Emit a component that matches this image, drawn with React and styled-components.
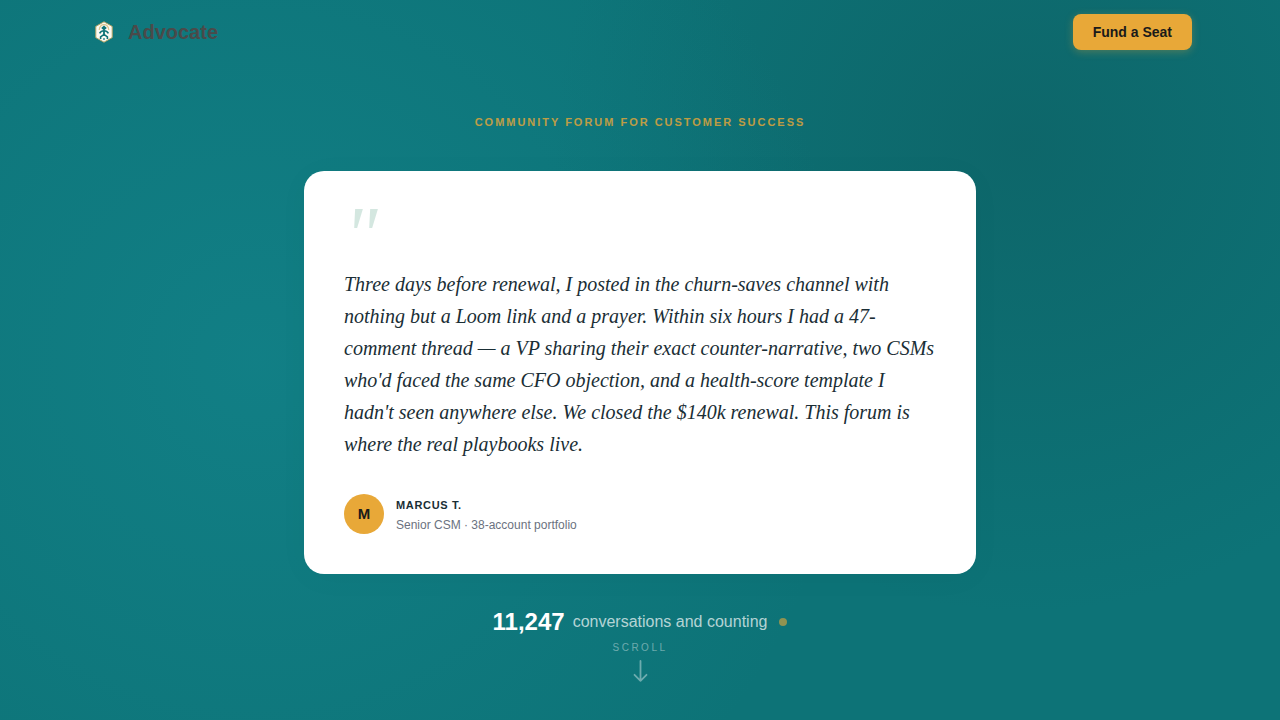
import styled, { createGlobalStyle } from "styled-components"

const GlobalStyle = createGlobalStyle`
* {
    box-sizing: border-box;
}
body {
    margin: 0;
    background: #0d7377;
    font-family: "Liberation Sans", Arial, sans-serif;
}
`

const testimonial = {
    quote: "Three days before renewal, I posted in the churn-saves channel with nothing but a Loom link and a prayer. Within six hours I had a 47-comment thread — a VP sharing their exact counter-narrative, two CSMs who'd faced the same CFO objection, and a health-score template I hadn't seen anywhere else. We closed the $140k renewal. This forum is where the real playbooks live.",
    name: "Marcus T.",
    role: "Senior CSM · 38-account portfolio",
}

const LogoIcon = () => (
    <svg width="32" height="32" viewBox="0 0 32 32" fill="none" aria-hidden="true">
        <path d="M16 5.8 L24.2 10.4 V21.6 L16 26.2 L7.8 21.6 V10.4 Z" fill="#fbfaf4" stroke="#b8a564" strokeWidth="1" strokeLinejoin="round" />
        <path d="M11.2 14 C11.6 10.4 13.6 8.6 16 8.6 C18.4 8.6 20.4 10.4 20.8 14" stroke="#dcc48c" strokeWidth="1.2" />
        <path d="M16 9.4 L18.8 12 L16 14.6 L13.2 12 Z" fill="#0d7377" />
        <path d="M11.6 17.4 C12.6 15.6 14.2 14.8 16 14.8 C17.8 14.8 19.4 15.6 20.4 17.4" stroke="#0d7377" strokeWidth="1.6" />
        <path d="M16 15 V20" stroke="#0d7377" strokeWidth="1.8" />
        <path d="M12.6 23 V20.8 L16 18.4 L19.4 20.8 V23" stroke="#0d7377" strokeWidth="1.6" />
        <path d="M16 22 V24" stroke="#0d7377" strokeWidth="1.2" />
    </svg>
)

const ArrowDown = () => (
    <svg width="16" height="24" viewBox="0 0 16 24" fill="none" stroke="currentColor" strokeWidth="1.8" strokeLinecap="round" strokeLinejoin="round" aria-hidden="true">
        <path d="M8.5 1 V20.8 M2.5 14.8 L8.5 20.8 L14.5 14.8" />
    </svg>
)

const App = () => {
    return (
        <Page>
            <GlobalStyle />
            <Header>
                <Brand href="#">
                    <LogoIcon />
                    Advocate
                </Brand>
                <FundButton type="button">Fund a Seat</FundButton>
            </Header>
            <Hero>
                <Eyebrow>Community forum for customer success</Eyebrow>
                <Card>
                    <QuoteMark aria-hidden="true">"</QuoteMark>
                    <Quote>{testimonial.quote}</Quote>
                    <Author>
                        <Avatar>{testimonial.name[0]}</Avatar>
                        <AuthorText>
                            <Name>{testimonial.name}</Name>
                            <Role>{testimonial.role}</Role>
                        </AuthorText>
                    </Author>
                </Card>
                <Counter>
                    <Count>11,247</Count>
                    <CountLabel>conversations and counting</CountLabel>
                    <Dot />
                </Counter>
                <ScrollHint href="#more">
                    Scroll
                    <ArrowDown />
                </ScrollHint>
            </Hero>
        </Page>
    )
}

const Page = styled.div`
    min-height: 100vh;
    background:
        radial-gradient(circle at 20% 50%, rgba(24, 145, 155, 0.4) 0%, transparent 55%),
        radial-gradient(circle at 80% 20%, rgba(14, 92, 95, 0.55) 0%, transparent 40%),
        #0d7377;
`

const Header = styled.header`
    display: flex;
    align-items: center;
    justify-content: space-between;
    max-width: 1152px;
    height: 64px;
    margin: 0 auto;
    padding: 0 24px;
`

const Brand = styled.a`
    display: flex;
    align-items: center;
    gap: 8px;
    font-size: 20px;
    font-weight: 700;
    color: #4a4a4a;
    text-decoration: none;
`

const FundButton = styled.button`
    height: 36px;
    padding: 0 20px;
    border: none;
    border-radius: 8px;
    background: #e8a838;
    box-shadow: 0 2px 8px rgba(232, 168, 56, 0.3);
    font-family: inherit;
    font-size: 14px;
    font-weight: 700;
    color: #1a1a1a;
    cursor: pointer;
`

const Hero = styled.main`
    display: flex;
    flex-direction: column;
    align-items: center;
    padding: 50px 24px 32px;
`

const Eyebrow = styled.p`
    margin: 0 0 41px;
    font-size: 11px;
    line-height: 16px;
    font-weight: 700;
    letter-spacing: 0.18em;
    text-transform: uppercase;
    color: #e8a838;
    opacity: 0.8;
`

const Card = styled.figure`
    width: 100%;
    max-width: 672px;
    margin: 0 0 32px;
    padding: 40px;
    border-radius: 20px;
    background: #fff;
    box-shadow: 0 4px 32px rgba(0, 0, 0, 0.03);
`

const QuoteMark = styled.div`
    margin-bottom: 9px;
    font-family: "Liberation Serif", "Times New Roman", serif;
    font-size: 80px;
    line-height: 48px;
    font-style: italic;
    color: #2d8a6a;
    opacity: 0.2;
`

const Quote = styled.blockquote`
    margin: 0 0 34px;
    font-family: "Liberation Serif", "Times New Roman", serif;
    font-size: 20px;
    line-height: 32px;
    font-style: italic;
    color: #1a2e35;
`

const Author = styled.figcaption`
    display: flex;
    align-items: center;
    gap: 12px;
`

const Avatar = styled.div`
    display: flex;
    align-items: center;
    justify-content: center;
    width: 40px;
    height: 40px;
    border-radius: 50%;
    background: #e8a838;
    font-size: 15px;
    line-height: 16px;
    font-weight: 700;
    color: #1a1a1a;
`

const AuthorText = styled.div`
    display: flex;
    flex-direction: column;
    gap: 2px;
    padding-top: 2px;
`

const Name = styled.div`
    font-size: 11px;
    line-height: 18px;
    font-weight: 700;
    letter-spacing: 0.06em;
    text-transform: uppercase;
    color: #1a2e35;
`

const Role = styled.div`
    font-size: 12px;
    line-height: 18px;
    color: #6b7280;
`

const Counter = styled.div`
    display: flex;
    align-items: center;
    gap: 8px;
    line-height: 32px;
`

const Count = styled.span`
    font-size: 24px;
    font-weight: 700;
    color: #fff;
`

const CountLabel = styled.span`
    font-size: 16px;
    color: rgba(255, 255, 255, 0.7);
`

const Dot = styled.span`
    width: 8px;
    height: 8px;
    margin-left: 4px;
    border-radius: 50%;
    background: #e8a838;
    opacity: 0.6;
`

const ScrollHint = styled.a`
    display: flex;
    flex-direction: column;
    align-items: center;
    gap: 4px;
    margin-top: 2px;
    font-size: 10px;
    line-height: 16px;
    letter-spacing: 0.25em;
    text-transform: uppercase;
    text-decoration: none;
    color: rgba(255, 255, 255, 0.4);
`

export default App
